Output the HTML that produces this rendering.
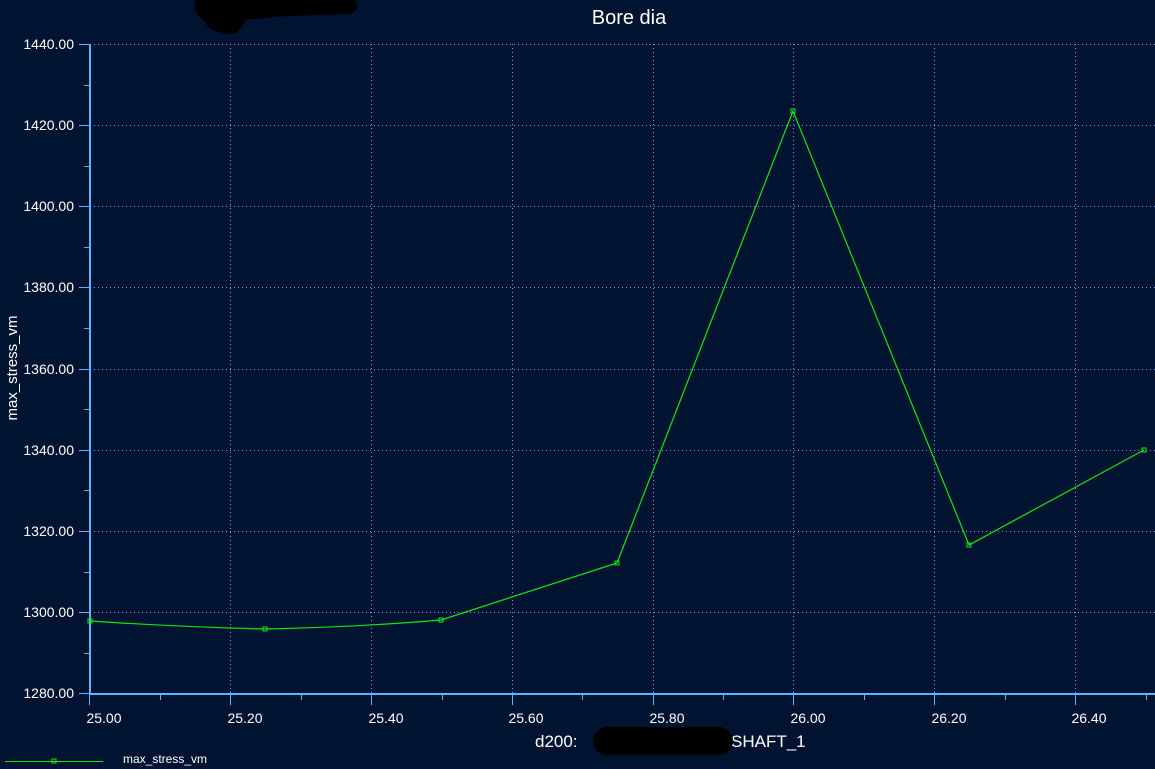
<!DOCTYPE html>
<html><head><meta charset="utf-8"><style>
html,body{margin:0;padding:0;background:#001432;}
svg{display:block}
text{font-family:"Liberation Sans",sans-serif;fill:#fff}
</style></head><body>
<svg width="1155" height="769" viewBox="0 0 1155 769" xmlns="http://www.w3.org/2000/svg">
<rect width="1155" height="769" fill="#001432"/>
<!-- grid -->
<g stroke="#4aa6ff" stroke-width="1" stroke-dasharray="1,3">
<line x1="90" y1="44.5" x2="1155" y2="44.5"/>
<line x1="90" y1="125.5" x2="1155" y2="125.5"/>
<line x1="90" y1="206.5" x2="1155" y2="206.5"/>
<line x1="90" y1="287.5" x2="1155" y2="287.5"/>
<line x1="90" y1="369.5" x2="1155" y2="369.5"/>
<line x1="90" y1="450.5" x2="1155" y2="450.5"/>
<line x1="90" y1="531.5" x2="1155" y2="531.5"/>
<line x1="90" y1="612.5" x2="1155" y2="612.5"/>
<line x1="230.5" y1="44" x2="230.5" y2="693"/>
<line x1="371.5" y1="44" x2="371.5" y2="693"/>
<line x1="512.5" y1="44" x2="512.5" y2="693"/>
<line x1="653.5" y1="44" x2="653.5" y2="693"/>
<line x1="793.5" y1="44" x2="793.5" y2="693"/>
<line x1="934.5" y1="44" x2="934.5" y2="693"/>
<line x1="1075.5" y1="44" x2="1075.5" y2="693"/>
</g>
<!-- axes -->
<g stroke="#5ab4ff">
<line x1="90" y1="44" x2="90" y2="695" stroke-width="2"/>
<line x1="89" y1="694" x2="1155" y2="694" stroke-width="2"/>
<g stroke-width="1">
<line x1="79" y1="44.5" x2="90" y2="44.5"/><line x1="84" y1="85.5" x2="90" y2="85.5"/>
<line x1="79" y1="125.5" x2="90" y2="125.5"/><line x1="84" y1="166.5" x2="90" y2="166.5"/>
<line x1="79" y1="206.5" x2="90" y2="206.5"/><line x1="84" y1="247.5" x2="90" y2="247.5"/>
<line x1="79" y1="287.5" x2="90" y2="287.5"/><line x1="84" y1="328.5" x2="90" y2="328.5"/>
<line x1="79" y1="369.5" x2="90" y2="369.5"/><line x1="84" y1="409.5" x2="90" y2="409.5"/>
<line x1="79" y1="450.5" x2="90" y2="450.5"/><line x1="84" y1="490.5" x2="90" y2="490.5"/>
<line x1="79" y1="531.5" x2="90" y2="531.5"/><line x1="84" y1="572.5" x2="90" y2="572.5"/>
<line x1="79" y1="612.5" x2="90" y2="612.5"/><line x1="84" y1="653.5" x2="90" y2="653.5"/>
<line x1="79" y1="693.5" x2="90" y2="693.5"/>
<line x1="89.5" y1="694" x2="89.5" y2="705"/><line x1="160.5" y1="694" x2="160.5" y2="700"/>
<line x1="230.5" y1="694" x2="230.5" y2="705"/><line x1="301.5" y1="694" x2="301.5" y2="700"/>
<line x1="371.5" y1="694" x2="371.5" y2="705"/><line x1="442.5" y1="694" x2="442.5" y2="700"/>
<line x1="512.5" y1="694" x2="512.5" y2="705"/><line x1="582.5" y1="694" x2="582.5" y2="700"/>
<line x1="653.5" y1="694" x2="653.5" y2="705"/><line x1="723.5" y1="694" x2="723.5" y2="700"/>
<line x1="793.5" y1="694" x2="793.5" y2="705"/><line x1="864.5" y1="694" x2="864.5" y2="700"/>
<line x1="934.5" y1="694" x2="934.5" y2="705"/><line x1="1005.5" y1="694" x2="1005.5" y2="700"/>
<line x1="1075.5" y1="694" x2="1075.5" y2="705"/><line x1="1146.5" y1="694" x2="1146.5" y2="700"/>
</g></g>
<!-- y labels -->
<g font-size="14" text-anchor="end">
<text x="74" y="49">1440.00</text><text x="74" y="130">1420.00</text>
<text x="74" y="211">1400.00</text><text x="74" y="292">1380.00</text>
<text x="74" y="374">1360.00</text><text x="74" y="455">1340.00</text>
<text x="74" y="536">1320.00</text><text x="74" y="617">1300.00</text>
<text x="74" y="698">1280.00</text>
</g>
<g font-size="14" text-anchor="middle">
<text x="104" y="723">25.00</text><text x="245" y="723">25.20</text>
<text x="386" y="723">25.40</text><text x="526" y="723">25.60</text>
<text x="667" y="723">25.80</text><text x="808" y="723">26.00</text>
<text x="949" y="723">26.20</text><text x="1089" y="723">26.40</text>
</g>
<text x="629" y="24" font-size="20" text-anchor="middle">Bore dia</text>
<text transform="translate(17,368) rotate(-90)" font-size="15" text-anchor="middle">max_stress_vm</text>
<text x="535" y="747" font-size="17">d200:</text>
<text x="731" y="747" font-size="17">SHAFT_1</text>
<!-- redactions -->
<path d="M200,0 H355 Q362,10 350,14 L290,16 Q270,17 245,20 Q240,33 232,34 Q210,33 205,22 Q192,12 195,0Z" fill="#000"/>
<rect x="593" y="727" width="140" height="28" rx="14" fill="#000"/>
<!-- data -->
<path d="M90,621 Q180,627 265,629 Q360,627 441,620 L617,563 L793,111 L969,545 L1144,450" fill="none" stroke="#10e810" stroke-width="1.2"/>
<g fill="none" stroke="#10e810" stroke-width="1">
<rect x="88" y="619" width="4" height="4"/><rect x="263" y="627" width="4" height="4"/>
<rect x="439" y="618" width="4" height="4"/><rect x="615" y="561" width="4" height="4"/>
<rect x="791" y="109" width="4" height="4"/><rect x="967" y="543" width="4" height="4"/>
<rect x="1142" y="448" width="4" height="4"/>
<line x1="5" y1="761.5" x2="103" y2="761.5"/><rect x="52" y="759" width="4" height="4"/>
</g>
<text x="123" y="763" font-size="12">max_stress_vm</text>
</svg>
</body></html>
